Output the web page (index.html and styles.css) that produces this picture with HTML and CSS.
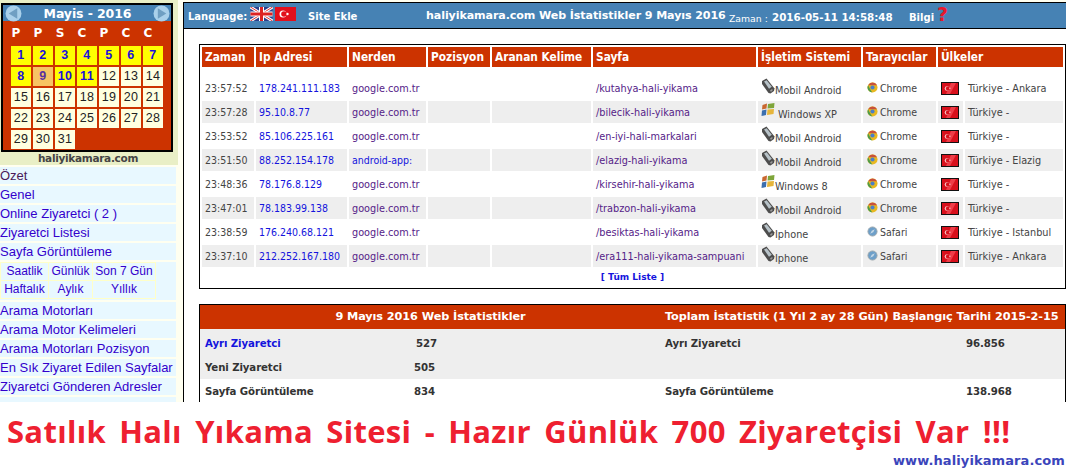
FILE: index.html
```html
<!DOCTYPE html>
<html lang="tr">
<head>
<meta charset="utf-8">
<title>haliyikamara.com Web İstatistikler</title>
<link rel="stylesheet" href="styles.css">
</head>
<body>
<svg class="defs" width="0" height="0" aria-hidden="true">
  <symbol id="phone" viewBox="0 0 14 16">
    <path d="M1 3 5.500 0.500 13.500 10.500 13 13 9.500 15.500 7.500 15 1 6Z" fill="#4d4d4d"/>
    <path d="M3 3.600 5.600 2.200 10.800 8.800 8 10.800Z" fill="#b7c2c8"/>
    <path d="M9 12.500 11 11 11.800 12 10 14Z" fill="#9a9a9a"/>
  </symbol>
  <symbol id="win" viewBox="0 0 14 14">
    <path d="M6 0.500 1.500 2 1 6.500 5.500 5.500Z" fill="#c9672f"/>
    <path d="M7 1 13.500 0 13 5 6.500 5.500Z" fill="#7ea53a"/>
    <path d="M1 7.500 5.500 6.500 5 12 0.500 13Z" fill="#3c6fae"/>
    <path d="M6.500 6.500 13 6 12.500 11 6 12Z" fill="#e6b53a"/>
  </symbol>
  <symbol id="chrome" viewBox="0 0 12 12">
    <circle cx="6" cy="6" r="5.500" fill="#e8b820"/>
    <path d="M1.200 3.500A5.500 5.500 0 0 1 11 3.500H6Z" fill="#c9503a"/>
    <path d="M1.200 3.500 3.800 8.500 5.800 11.500A5.500 5.500 0 0 1 1.200 3.500Z" fill="#4f9c4a"/>
    <circle cx="6" cy="6" r="2.300" fill="#4a7fc8"/>
  </symbol>
  <symbol id="safari" viewBox="0 0 12 12">
    <circle cx="6" cy="6" r="5" fill="#6d9fc9" stroke="#9fa8ad"/>
    <path d="M8.500 3.500 6.800 6.800 3.500 8.500 5.200 5.200Z" fill="#c7d9e6"/>
  </symbol>
  <symbol id="tr" viewBox="0 0 18 13">
    <rect width="18" height="13" fill="#111"/>
    <rect x="1" y="1" width="16" height="11" fill="#d8101c"/>
    <path d="M10 1 15 1 9 12 5 12Z" fill="#ee3d48"/>
    <circle cx="6" cy="6.500" r="2.300" fill="#f6c8c8"/>
    <circle cx="6.800" cy="6.500" r="1.900" fill="#d8101c"/>
    <circle cx="8.900" cy="6.300" r="0.700" fill="#f6c8c8"/>
  </symbol>
</svg>

<div class="page">
  <aside class="side">
    <div class="cal">
      <div class="cal-head">
        <svg class="cal-arrow" viewBox="0 0 16 16"><circle cx="8" cy="8" r="7.500" fill="#a9d0ea"/><path d="M11.500 3 3.500 8 11.500 13Z" fill="#6f9fc2"/></svg>
        <span class="cal-title">Mayis - 2016</span>
        <svg class="cal-arrow" viewBox="0 0 16 16"><circle cx="8" cy="8" r="7.500" fill="#a9d0ea"/><path d="M4.500 3 12.500 8 4.500 13Z" fill="#6f9fc2"/></svg>
      </div>
      <div class="cal-grid">
        <span class="dow">P</span><span class="dow">P</span><span class="dow">S</span><span class="dow">C</span><span class="dow">P</span><span class="dow">C</span><span class="dow">C</span>
        <a class="day on">1</a><a class="day on">2</a><a class="day on">3</a><a class="day on">4</a><a class="day on">5</a><a class="day on">6</a><a class="day on">7</a>
        <a class="day on">8</a><a class="day now">9</a><a class="day on">10</a><a class="day on">11</a><a class="day">12</a><a class="day">13</a><a class="day">14</a>
        <a class="day">15</a><a class="day">16</a><a class="day">17</a><a class="day">18</a><a class="day">19</a><a class="day">20</a><a class="day">21</a>
        <a class="day">22</a><a class="day">23</a><a class="day">24</a><a class="day">25</a><a class="day">26</a><a class="day">27</a><a class="day">28</a>
        <a class="day">29</a><a class="day">30</a><a class="day">31</a>
      </div>
    </div>
    <div class="side-site">haliyikamara.com</div>
    <nav class="menu">
      <a class="item cur">Özet</a>
      <a class="item">Genel</a>
      <a class="item">Online Ziyaretci ( 2 )</a>
      <a class="item">Ziyaretci Listesi</a>
      <a class="item">Sayfa Görüntüleme</a>
      <div class="subwrap">
        <table class="sub">
          <tr><td class="c1">Saatlik</td><td class="c2">Günlük</td><td class="c3">Son 7 Gün</td></tr>
          <tr><td class="c1">Haftalık</td><td class="c2">Aylık</td><td class="c3">Yıllık</td></tr>
        </table>
      </div>
      <a class="item">Arama Motorları</a>
      <a class="item">Arama Motor Kelimeleri</a>
      <a class="item">Arama Motorları Pozisyon</a>
      <a class="item">En Sık Ziyaret Edilen Sayfalar</a>
      <a class="item">Ziyaretci Gönderen Adresler</a>
      <a class="item"></a>
    </nav>
  </aside>

  <main class="main">
    <header class="bar">
      <span class="lang">Language:</span>
      <svg class="flag-uk" viewBox="0 0 22 14"><rect width="22" height="14" fill="#2b3f8c"/><path d="M0 0 22 14M22 0 0 14" stroke="#fff" stroke-width="3"/><path d="M0 0 22 14M22 0 0 14" stroke="#d33" stroke-width="1"/><path d="M11 0V14M0 7H22" stroke="#fff" stroke-width="5"/><path d="M11 0V14M0 7H22" stroke="#d22" stroke-width="3"/></svg>
      <svg class="flag-tr" viewBox="0 0 21 14"><rect width="21" height="14" fill="#e2101c"/><circle cx="8" cy="7" r="3.500" fill="#fff"/><circle cx="9" cy="7" r="2.800" fill="#e2101c"/><circle cx="12.500" cy="7" r="1.200" fill="#fff"/></svg>
      <span class="add">Site Ekle</span>
      <span class="title">haliyikamara.com Web İstatistikler 9 Mayıs 2016</span>
      <span class="clock">Zaman :</span>
      <span class="stamp">2016-05-11 14:58:48</span>
      <span class="info">Bilgi</span>
      <span class="help">?</span>
    </header>

    <section class="box logbox">
      <table class="log">
        <colgroup>
          <col class="w1"><col class="w2"><col class="w3"><col class="w4"><col class="w5"><col class="w6"><col class="w7"><col class="w8"><col class="w9"><col class="w10">
        </colgroup>
        <tr class="hd"><th>Zaman</th><th>Ip Adresi</th><th>Nerden</th><th>Pozisyon</th><th>Aranan Kelime</th><th>Sayfa</th><th>İşletim Sistemi</th><th>Tarayıcılar</th><th colspan="2">Ülkeler</th></tr>
        <tr class="gap"><td colspan="10"></td></tr>
        <tr><td class="tm">23:57:52</td><td class="ip">178.241.111.183</td><td class="ref">google.com.tr</td><td></td><td></td><td class="ref">/kutahya-hali-yikama</td><td class="os"><svg class="ico"><use href="#phone"/></svg>Mobil Android</td><td class="brw"><svg class="br"><use href="#chrome"/></svg>Chrome</td><td class="fl"><svg class="trf"><use href="#tr"/></svg></td><td class="ct">Türkiye - Ankara</td></tr>
        <tr class="alt"><td class="tm">23:57:28</td><td class="ip">95.10.8.77</td><td class="ref">google.com.tr</td><td></td><td></td><td class="ref">/bilecik-hali-yikama</td><td class="os"><svg class="ico xp"><use href="#win"/></svg>Windows XP</td><td class="brw"><svg class="br"><use href="#chrome"/></svg>Chrome</td><td class="fl"><svg class="trf"><use href="#tr"/></svg></td><td class="ct">Türkiye -</td></tr>
        <tr><td class="tm">23:53:52</td><td class="ip">85.106.225.161</td><td class="ref">google.com.tr</td><td></td><td></td><td class="ref">/en-iyi-hali-markalari</td><td class="os"><svg class="ico"><use href="#phone"/></svg>Mobil Android</td><td class="brw"><svg class="br"><use href="#chrome"/></svg>Chrome</td><td class="fl"><svg class="trf"><use href="#tr"/></svg></td><td class="ct">Türkiye -</td></tr>
        <tr class="alt"><td class="tm">23:51:50</td><td class="ip">88.252.154.178</td><td class="ip">android-app:</td><td></td><td></td><td class="ref">/elazig-hali-yikama</td><td class="os"><svg class="ico"><use href="#phone"/></svg>Mobil Android</td><td class="brw"><svg class="br"><use href="#chrome"/></svg>Chrome</td><td class="fl"><svg class="trf"><use href="#tr"/></svg></td><td class="ct">Türkiye - Elazig</td></tr>
        <tr><td class="tm">23:48:36</td><td class="ip">78.176.8.129</td><td class="ref">google.com.tr</td><td></td><td></td><td class="ref">/kirsehir-hali-yikama</td><td class="os"><svg class="ico"><use href="#win"/></svg>Windows 8</td><td class="brw"><svg class="br"><use href="#chrome"/></svg>Chrome</td><td class="fl"><svg class="trf"><use href="#tr"/></svg></td><td class="ct">Türkiye -</td></tr>
        <tr class="alt"><td class="tm">23:47:01</td><td class="ip">78.183.99.138</td><td class="ref">google.com.tr</td><td></td><td></td><td class="ref">/trabzon-hali-yikama</td><td class="os"><svg class="ico"><use href="#phone"/></svg>Mobil Android</td><td class="brw"><svg class="br"><use href="#chrome"/></svg>Chrome</td><td class="fl"><svg class="trf"><use href="#tr"/></svg></td><td class="ct">Türkiye -</td></tr>
        <tr><td class="tm">23:38:59</td><td class="ip">176.240.68.121</td><td class="ref">google.com.tr</td><td></td><td></td><td class="ref">/besiktas-hali-yikama</td><td class="os"><svg class="ico"><use href="#phone"/></svg>Iphone</td><td class="brw"><svg class="br"><use href="#safari"/></svg>Safari</td><td class="fl"><svg class="trf"><use href="#tr"/></svg></td><td class="ct">Türkiye - Istanbul</td></tr>
        <tr class="alt"><td class="tm">23:37:10</td><td class="ip">212.252.167.180</td><td class="ref">google.com.tr</td><td></td><td></td><td class="ref">/era111-hali-yikama-sampuani</td><td class="os"><svg class="ico"><use href="#phone"/></svg>Iphone</td><td class="brw"><svg class="br"><use href="#safari"/></svg>Safari</td><td class="fl"><svg class="trf"><use href="#tr"/></svg></td><td class="ct">Türkiye - Ankara</td></tr>
      </table>
      <div class="all">[ Tüm Liste ]</div>
    </section>

    <section class="box statbox">
      <div class="st-row st-head"><div class="s-left">9 Mayıs 2016 Web İstatistikler</div><div class="s-right">Toplam İstatistik (1 Yıl 2 ay 28 Gün) Başlangıç Tarihi 2015-2-15</div></div>
      <div class="st-row grey r1"><div class="a"><a class="lnk">Ayrı Ziyaretci</a></div><div class="b off">527</div><div class="a2">Ayrı Ziyaretci</div><div class="b2">96.856</div></div>
      <div class="st-row grey r2"><div class="a">Yeni Ziyaretci</div><div class="b">505</div><div class="a2"></div><div class="b2"></div></div>
      <div class="st-row r3"><div class="a">Sayfa Görüntüleme</div><div class="b">834</div><div class="a2">Sayfa Görüntüleme</div><div class="b2">138.968</div></div>
    </section>
  </main>
</div>

<div class="banner">
  <div class="ad">Satılık Halı Yıkama Sitesi - Hazır Günlük 700 Ziyaretçisi Var !!!</div>
  <div class="url">www.haliyikamara.com</div>
</div>
</body>
</html>
```
FILE: styles.css
```css
* { box-sizing: border-box; }
html, body { margin: 0; padding: 0; height: 472px; overflow: hidden; }
body { background: #fffff0; font-family: "DejaVu Sans", sans-serif; color: #333; position: relative; }
.defs { position: absolute; }
.page { display: flex; align-items: flex-start; height: 472px; }

.side { flex: 0 0 178px; width: 178px; }
.cal { width: 172px; margin: 3px 0 0 1px; border: 2px solid #000; background: #cc3300; height: 149px; }
.cal-head { display: flex; align-items: center; justify-content: space-between; height: 16px; background: #4682b4; padding: 0 1px 0 2px; }
.cal-arrow { width: 17px; height: 17px; flex: none; }
.cal-title { font: bold 12.500px "DejaVu Sans", sans-serif; color: #fff; letter-spacing: -0.100px; }
.cal-grid { display: grid; grid-template-columns: repeat(7, 20px); grid-template-rows: 21px repeat(5, 19px); gap: 2px; padding: 2px 0 0 8px; }
.dow { font: bold 12px "DejaVu Sans", sans-serif; color: #fff; text-align: center; line-height: 20px; padding-right: 10px; }
.day { background: #ffffe0; color: #222; font: 12.500px/19px "Liberation Sans", sans-serif; letter-spacing: 0.300px; text-align: center; }
.day.on { background: #ffff00; color: #1a10dd; font-weight: bold; }
.day.now { background: #f7c463; color: #5a2fa0; font-weight: bold; }

.side-site { background: #e9efc6; width: 178px; margin-top: -152px; padding: 152px 2px 0 0; height: 165px; font: bold 10.500px/13px "DejaVu Sans", sans-serif; text-align: center; color: #444; letter-spacing: -0.300px; position: relative; z-index: -1; }
.menu { display: flex; flex-direction: column; gap: 2px; width: 176px; padding-top: 2px; }
.item { display: block; height: 17px; flex: none; background: #e8f8ff; font: 13px/17px "Liberation Sans", sans-serif; color: #3300cc; white-space: nowrap; overflow: hidden; }
.item.cur { color: #4a1a5a; }
.subwrap { background: #e8f8ff; height: 38px; }
.sub { border-collapse: collapse; font: 12px/17px "Liberation Sans", sans-serif; color: #3300cc; text-align: center; }
.sub td { border: 1px solid #ffffc8; padding: 0; height: 18px; }
.sub .c1 { width: 48px; } .sub .c2 { width: 44px; } .sub .c3 { width: 63px; }

.main { flex: 0 0 883px; margin-left: 5px; margin-top: 2px; background: #fff; height: 470px; border-left: 1px solid #000; }
.bar { display: flex; align-items: center; height: 27px; background: #4682b4; border-top: 1px solid #000; border-bottom: 1px solid #000; color: #fff; white-space: nowrap; font: bold 10px "DejaVu Sans", sans-serif; padding-left: 4px; }
.lang { width: 62px; padding-top: 2px; }
.flag-uk { width: 23px; height: 14px; margin: -3px 2px 0 0; }
.flag-tr { width: 21px; height: 14px; margin: -3px 12px 0 0; }
.add { width: 118px; padding-top: 2px; }
.title { font-size: 11.100px; width: 303px; letter-spacing: -0.100px; }
.clock { font-weight: normal; width: 43px; font-size: 9.300px; padding-top: 5px; }
.stamp { width: 137px; font-size: 10.300px; padding-top: 2px; }
.info { width: 28px; padding-top: 3px; }
.help { color: #e8182c; font: bold 19px "DejaVu Sans", sans-serif; line-height: 19px; margin-top: -3px; }

.box { width: 867px; margin: 15px 0 0 15px; border: 1px solid #000; background: #fff; }
.log { width: 865px; table-layout: fixed; border-collapse: separate; border-spacing: 2px; font: 10.500px "DejaVu Sans Condensed", "DejaVu Sans", sans-serif; font-stretch: condensed; color: #444; }
.w1 { width: 52px; } .w2 { width: 91px; } .w3 { width: 77px; } .w4 { width: 62px; } .w5 { width: 99px; } .w6 { width: 163px; } .w7 { width: 103px; } .w8 { width: 73px; } .w9 { width: 25px; } .w10 { width: 98px; }
.log th { background: #cc3300; color: #fff; font: bold 11.800px "DejaVu Sans Condensed", "DejaVu Sans", sans-serif; font-stretch: condensed; height: 20px; padding: 0 0 0 3px; text-align: left; white-space: nowrap; }
.log .gap td { height: 6px; padding: 0; }
.log td { height: 22px; padding: 0 0 0 3px; white-space: nowrap; line-height: 13px; }
.log .alt td { background: #eeeeee; }
.ip { color: #1414dd; }
.log .ref { color: #552288; font-size: 10.800px; }
.log .ct, .log .os { font-size: 10.800px; }
.log td.os { vertical-align: top; padding-top: 7px; }
.ico { width: 14px; height: 16px; vertical-align: 1px; margin: -8px 0 -1px 0; }
.ico.xp { margin-right: 3px; }
.br { width: 11px; height: 11px; margin: 0 2px 0 1px; vertical-align: -1px; }
.fl { text-align: center; }
.log td.fl { padding: 0 2px 0 0; }
.trf { width: 18px; height: 13px; vertical-align: middle; }
.all { text-align: center; color: #1414dd; font: bold 9px/17px "DejaVu Sans", sans-serif; margin-bottom: 2px; }

.statbox { border-bottom: 0; height: 150px; }
.st-row { display: flex; height: 25px; font: bold 10.200px/26px "DejaVu Sans", sans-serif; letter-spacing: -0.100px; color: #333; }
.st-row.grey { background: #eeeeee; }
.st-row.r1 { line-height: 30px; }
.st-row.r2 { line-height: 28px; }
.st-row.r3 { line-height: 26px; }
.st-head { background: #cc3300; color: #fff; height: 24px; font-size: 11.300px; line-height: 24px; }
.s-left { width: 461px; text-align: center; }
.s-right { padding-left: 4px; white-space: nowrap; }
.a { width: 214px; padding-left: 5px; white-space: nowrap; }
.b { width: 251px; }
.b.off { padding-left: 2px; }
.a2 { width: 301px; white-space: nowrap; }
.b2 { width: 99px; }
.lnk { color: #1414dd; }

.banner { position: absolute; left: 0; top: 402px; width: 1066px; height: 70px; background: #fff; }
.ad { position: absolute; left: 7px; top: 9px; color: #ee2030; font: bold 31px/40px "Open Sans", sans-serif; white-space: nowrap; letter-spacing: 0.300px; word-spacing: 5px; }
.url { position: absolute; right: 1px; top: 50px; color: #3b45bb; font: bold 13px/17px "DejaVu Sans", sans-serif; letter-spacing: 0.100px; white-space: nowrap; }
```
